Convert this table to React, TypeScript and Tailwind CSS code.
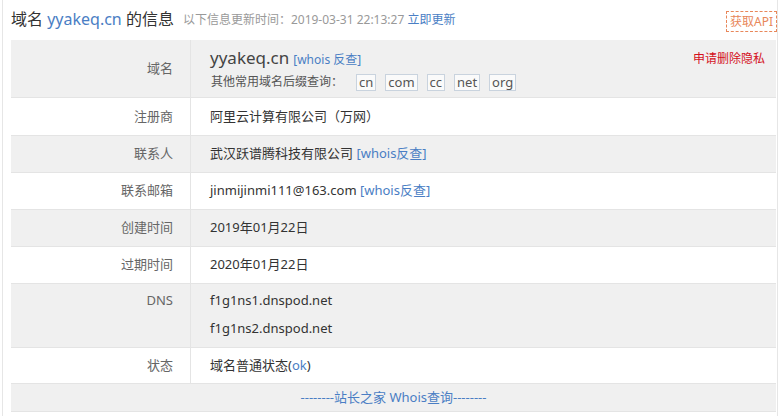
import React from "react";

const font = "font-['Noto_Sans','Noto_Sans_CJK_SC',sans-serif]";

// whois info rows below the domain row
const rows: { label: string; value: React.ReactNode; h: string; tall?: boolean }[] = [
  { label: "注册商", value: "阿里云计算有限公司（万网）", h: "h-[38px]" },
  {
    label: "联系人",
    h: "h-[37px]",
    value: (
      <>
        武汉跃谱腾科技有限公司 <a className="text-[#4a7ec4]">[whois反查]</a>
      </>
    ),
  },
  {
    label: "联系邮箱",
    h: "h-[37px]",
    value: (
      <>
        jinmijinmi111@163.com <a className="text-[#4a7ec4]">[whois反查]</a>
      </>
    ),
  },
  { label: "创建时间", value: "2019年01月22日", h: "h-[37px]" },
  { label: "过期时间", value: "2020年01月22日", h: "h-[37px]" },
  {
    label: "DNS",
    tall: true,
    h: "h-[64px]",
    value: (
      <div className="flex flex-col gap-[8px]">
        <span>f1g1ns1.dnspod.net</span>
        <span>f1g1ns2.dnspod.net</span>
      </div>
    ),
  },
  {
    label: "状态",
    h: "h-[36px]",
    value: (
      <>
        域名普通状态(<a className="text-[#4a7ec4]">ok</a>)
      </>
    ),
  },
];

const suffixes = ["cn", "com", "cc", "net", "org"];

export default function App() {
  return (
    <div className={`w-[781px] h-[416px] bg-white overflow-hidden ${font}`}>
      <div className="ml-[2px] w-[776px] h-full border-l border-r border-[#e6e6e6] pl-[8px] pr-[1px]">
        {/* Title */}
        <div className="flex items-center h-[40px] pb-[2px]">
          <h1 className="text-[16px] leading-[20px] text-[#333] font-normal">
            域名 <span className="text-[#4a7ec4]">yyakeq.cn</span> 的信息
          </h1>
          <span className="ml-[9px] text-[12px] leading-[20px] text-[#999] mt-[1px]">
            以下信息更新时间：2019-03-31 22:13:27{" "}
            <a className="text-[#4a7ec4]">立即更新</a>
          </span>
          <a className="ml-auto mr-[-1px] border border-dashed border-[#e8875a] text-[#e8875a] text-[12px] leading-[19px] px-[3px] mt-[5px]">
            获取API
          </a>
        </div>

        {/* Table */}
        <div className="w-[765px] text-[13px] text-[#333]">
          <div className="flex h-[58px] bg-[#f0f0f0] border-b border-[#e4e4e4]">
            <div className="w-[180px] shrink-0 border-r border-[#e4e4e4] flex items-center justify-end pr-[17px] text-[#666] pt-[1px]">
              域名
            </div>
            <div className="flex-1 pl-[19px] pr-[11px] pt-[5px]">
              <div className="flex items-center h-[26px]">
                <span className="text-[17px] leading-[26px] text-[#444]">yyakeq.cn</span>
                <a className="ml-[4px] text-[12px] text-[#4a7ec4] mt-[3px]">[whois 反查]</a>
                <a className="ml-auto text-[12px] text-[#d4101c] mt-[1px]">申请删除隐私</a>
              </div>
              <div className="flex items-center h-[22px] text-[12px] text-[#555]">
                <span className="ml-[1px]">其他常用域名后缀查询：</span>
                <div className="flex gap-[9px] ml-[13px]">
                  {suffixes.map((s) => (
                    <a
                      key={s}
                      className="border border-[#c9d3de] bg-[#fafafa] text-[13px] leading-[15px] px-[2px] text-[#555]"
                    >
                      {s}
                    </a>
                  ))}
                </div>
              </div>
            </div>
          </div>

          {rows.map((r, i) => (
            <div
              key={r.label}
              className={`flex border-b border-[#e4e4e4] ${
                i % 2 === 0 ? "bg-white" : "bg-[#f0f0f0]"
              } ${r.h}`}
            >
              <div
                className={`w-[180px] shrink-0 border-r border-[#e4e4e4] flex justify-end pr-[17px] text-[#666] ${
                  r.tall ? "items-start pt-[7px]" : "items-center"
                }`}
              >
                {r.label}
              </div>
              <div
                className={`flex-1 pl-[19px] flex ${
                  r.tall ? "items-start pt-[7px]" : "items-center"
                }`}
              >
                <div>{r.value}</div>
              </div>
            </div>
          ))}

          <div className="h-[28px] bg-[#f0f0f0] border-b border-[#e4e4e4] flex items-center justify-center text-[#4a7ec4]">
            --------站长之家 Whois查询--------
          </div>
        </div>
      </div>
    </div>
  );
}
